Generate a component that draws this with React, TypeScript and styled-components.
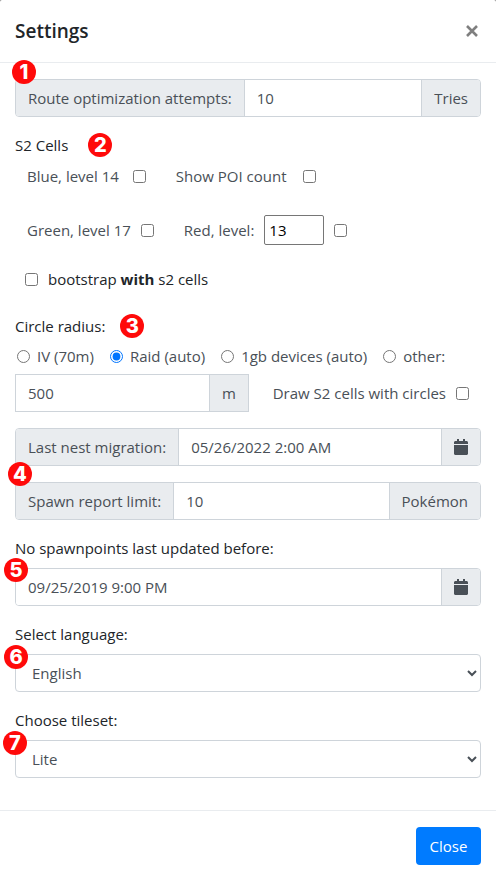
import React from "react";
import styled, { createGlobalStyle } from "styled-components";

const GlobalStyle = createGlobalStyle`
  *, *::before, *::after { box-sizing: border-box; }
  body {
    margin: 0;
    background: #808080;
    color: #212529;
    font-family: "Open Sans", "Noto Sans", sans-serif;
    font-size: 15px;
    line-height: 24px;
  }
  button, input, select { font: inherit; margin: 0; }
`;

const Dialog = styled.main`
  display: flex;
  flex-direction: column;
  min-height: 100vh;
  background: #fff;
  border-radius: 2px 2px 0 0;
`;

const Header = styled.header`
  display: flex;
  align-items: center;
  justify-content: space-between;
  padding: 16px 15px;
  border-bottom: 1px solid #e9ecef;
`;

const Title = styled.h1`
  margin: 0;
  font-size: 19px;
  font-weight: 600;
  line-height: 30px;
`;

const Dismiss = styled.button`
  display: flex;
  padding: 2px;
  border: 0;
  background: none;
  color: #7f7f7f;
  cursor: pointer;
`;

const Body = styled.div`
  display: flex;
  flex-direction: column;
  gap: 16px;
  padding: 16px 15px 32px;
`;

const Footer = styled.footer`
  display: flex;
  justify-content: flex-end;
  padding: 16px 15px;
  border-top: 1px solid #e9ecef;
`;

const CloseButton = styled.button`
  min-width: 65px;
  height: 38px;
  padding: 0 12px;
  border: 0;
  border-radius: 4px;
  background: #007bff;
  color: #fff;
  cursor: pointer;
`;

const Badge = styled.span`
  display: inline-flex;
  align-items: center;
  justify-content: center;
  width: 24px;
  height: 24px;
  border-radius: 50%;
  background: #ff0a0a;
  color: #fff;
  font-family: Inter, sans-serif;
  font-size: 20px;
  font-weight: 800;
`;

const CornerBadge = styled(Badge)<{ $left: number; $top: number }>`
  position: absolute;
  z-index: 1;
  left: ${(p) => p.$left}px;
  top: ${(p) => p.$top}px;
`;

const Anchor = styled.div`
  position: relative;
`;

const Group = styled.div<{ $square?: boolean; $width?: string }>`
  display: flex;
  width: ${(p) => p.$width ?? "auto"};
  height: 38px;
  overflow: hidden;
  border: 1px solid #ced4da;
  border-radius: ${(p) => (p.$square ? 0 : 4)}px;
`;

const Addon = styled.label`
  display: flex;
  align-items: center;
  flex: none;
  padding: 0 12px;
  background: #e9ecef;
  color: #495057;
  white-space: nowrap;
`;

const IconButton = styled.button`
  display: flex;
  align-items: center;
  flex: none;
  padding: 0 12px;
  border: 0;
  background: #e9ecef;
  color: #495057;
  cursor: pointer;
`;

const Field = styled.input`
  flex: 1;
  min-width: 0;
  padding: 0 12px;
  border: 0 solid #ced4da;
  background: #fff;
  color: #495057;

  &:not(:first-child) { border-left-width: 1px; }
  &:not(:last-child) { border-right-width: 1px; }
`;

const Section = styled.section<{ $gap?: number }>`
  display: flex;
  flex-direction: column;
  gap: ${(p) => p.$gap ?? 0}px;
`;

const Heading = styled.div<{ $gap: number }>`
  display: flex;
  align-items: center;
  gap: ${(p) => p.$gap}px;
  height: 24px;
`;

const Label = styled.label`
  display: block;
`;

const CellRow = styled.div<{ $gap: number }>`
  display: flex;
  align-items: center;
  gap: ${(p) => p.$gap}px;
  height: 38px;
  padding-left: 12px;
`;

const Choice = styled.label<{ $gap?: number; $dark?: boolean }>`
  display: flex;
  align-items: center;
  gap: ${(p) => p.$gap ?? 10}px;
  color: ${(p) => (p.$dark ? "#212529" : "#495057")};
  white-space: nowrap;
`;

const Check = styled.input`
  flex: none;
  width: 13px;
  height: 13px;
`;

const LevelControl = styled.div`
  display: flex;
  align-items: center;
  gap: 10px;
`;

const LevelInput = styled.input`
  width: 60px;
  height: 30px;
  padding: 0 4px;
  border: 1px solid #767676;
  border-radius: 2px;
  color: #000;
`;

const BootstrapRow = styled.div`
  display: flex;
  padding: 2px 0 7px 10px;
`;

const RadioRow = styled.div`
  display: flex;
  align-items: center;
  flex-wrap: wrap;
  gap: 16px;
  padding-left: 2px;
`;

const RadiusRow = styled.div`
  display: flex;
  align-items: center;
  justify-content: space-between;
  padding-right: 12px;
`;

const Select = styled.select`
  display: block;
  width: 100%;
  height: 38px;
  padding: 0 0 0 12px;
  border: 1px solid #ced4da;
  border-radius: 4px;
  background: #fff;
  color: #495057;
`;

function CalendarIcon() {
  return (
    <svg width="14" height="16" viewBox="0 0 448 512" fill="currentColor" aria-hidden="true">
      <path d="M0 464c0 26.500 21.500 48 48 48h352c26.500 0 48-21.500 48-48V192H0v272zM448 160v-48c0-26.500-21.500-48-48-48h-48V12c0-6.600-5.400-12-12-12h-40c-6.600 0-12 5.400-12 12v52H160V12c0-6.600-5.400-12-12-12h-40c-6.600 0-12 5.400-12 12v52H48C21.500 64 0 85.500 0 112v48z" />
    </svg>
  );
}

function CrossIcon() {
  return (
    <svg width="14" height="14" viewBox="0 0 14 14" aria-hidden="true">
      <path d="M2 2l10 10M12 2L2 12" stroke="currentColor" strokeWidth="2.600" />
    </svg>
  );
}

const radii = [
  { id: "iv", text: "IV (70m)" },
  { id: "raid", text: "Raid (auto)" },
  { id: "gb", text: "1gb devices (auto)" },
  { id: "other", text: "other:" },
];

export default function App() {
  return (
    <>
      <GlobalStyle />
      <Dialog>
        <Header>
          <Title>Settings</Title>
          <Dismiss type="button" aria-label="Dismiss">
            <CrossIcon />
          </Dismiss>
        </Header>
        <Body>
          <Anchor>
            <CornerBadge $left={-3} $top={-19}>1</CornerBadge>
            <Group>
              <Addon htmlFor="attempts">Route optimization attempts:</Addon>
              <Field id="attempts" defaultValue="10" />
              <Addon as="span">Tries</Addon>
            </Group>
          </Anchor>

          <Section>
            <Heading $gap={20}>
              <span>S2 Cells</span>
              <Badge>2</Badge>
            </Heading>
            <Section $gap={16}>
              <CellRow $gap={30}>
                <Choice $gap={14}>
                  Blue, level 14
                  <Check type="checkbox" />
                </Choice>
                <Choice $gap={16}>
                  Show POI count
                  <Check type="checkbox" />
                </Choice>
              </CellRow>
              <CellRow $gap={30}>
                <Choice>
                  Green, level 17
                  <Check type="checkbox" />
                </Choice>
                <LevelControl>
                  <Choice htmlFor="red-level">Red, level:</Choice>
                  <LevelInput id="red-level" defaultValue="13" />
                  <Check type="checkbox" aria-label="Show red cells" />
                </LevelControl>
              </CellRow>
              <BootstrapRow>
                <Choice $dark>
                  <Check type="checkbox" />
                  <span>
                    bootstrap <strong>with</strong> s2 cells
                  </span>
                </Choice>
              </BootstrapRow>
            </Section>
          </Section>

          <Section $gap={6}>
            <Heading $gap={15}>
              <span>Circle radius:</span>
              <Badge>3</Badge>
            </Heading>
            <RadioRow role="radiogroup" aria-label="Circle radius">
              {radii.map((r) => (
                <Choice key={r.id} $gap={7}>
                  <Check type="radio" name="radius" defaultChecked={r.id === "raid"} />
                  {r.text}
                </Choice>
              ))}
            </RadioRow>
            <RadiusRow>
              <Group $square $width="234px">
                <Field aria-label="Radius in metres" defaultValue="500" />
                <Addon as="span">m</Addon>
              </Group>
              <Choice>
                Draw S2 cells with circles
                <Check type="checkbox" />
              </Choice>
            </RadiusRow>
          </Section>

          <Group>
            <Addon htmlFor="migration">Last nest migration:</Addon>
            <Field id="migration" defaultValue="05/26/2022 2:00 AM" />
            <IconButton type="button" aria-label="Pick migration date">
              <CalendarIcon />
            </IconButton>
          </Group>

          <Anchor>
            <CornerBadge $left={-7} $top={-20}>4</CornerBadge>
            <Group>
              <Addon htmlFor="limit">Spawn report limit:</Addon>
              <Field id="limit" defaultValue="10" />
              <Addon as="span">Pokémon</Addon>
            </Group>
          </Anchor>

          <Section $gap={8}>
            <Label htmlFor="before">No spawnpoints last updated before:</Label>
            <Anchor>
              <CornerBadge $left={-11} $top={-10}>5</CornerBadge>
              <Group>
                <Field id="before" defaultValue="09/25/2019 9:00 PM" />
                <IconButton type="button" aria-label="Pick spawnpoint date">
                  <CalendarIcon />
                </IconButton>
              </Group>
            </Anchor>
          </Section>

          <Section $gap={8}>
            <Label htmlFor="language">Select language:</Label>
            <Anchor>
              <CornerBadge $left={-11} $top={-9}>6</CornerBadge>
              <Select id="language">
                <option>English</option>
              </Select>
            </Anchor>
          </Section>

          <Section $gap={8}>
            <Label htmlFor="tileset">Choose tileset:</Label>
            <Anchor>
              <CornerBadge $left={-12} $top={-9}>7</CornerBadge>
              <Select id="tileset">
                <option>Lite</option>
              </Select>
            </Anchor>
          </Section>
        </Body>
        <Footer>
          <CloseButton type="button">Close</CloseButton>
        </Footer>
      </Dialog>
    </>
  );
}
